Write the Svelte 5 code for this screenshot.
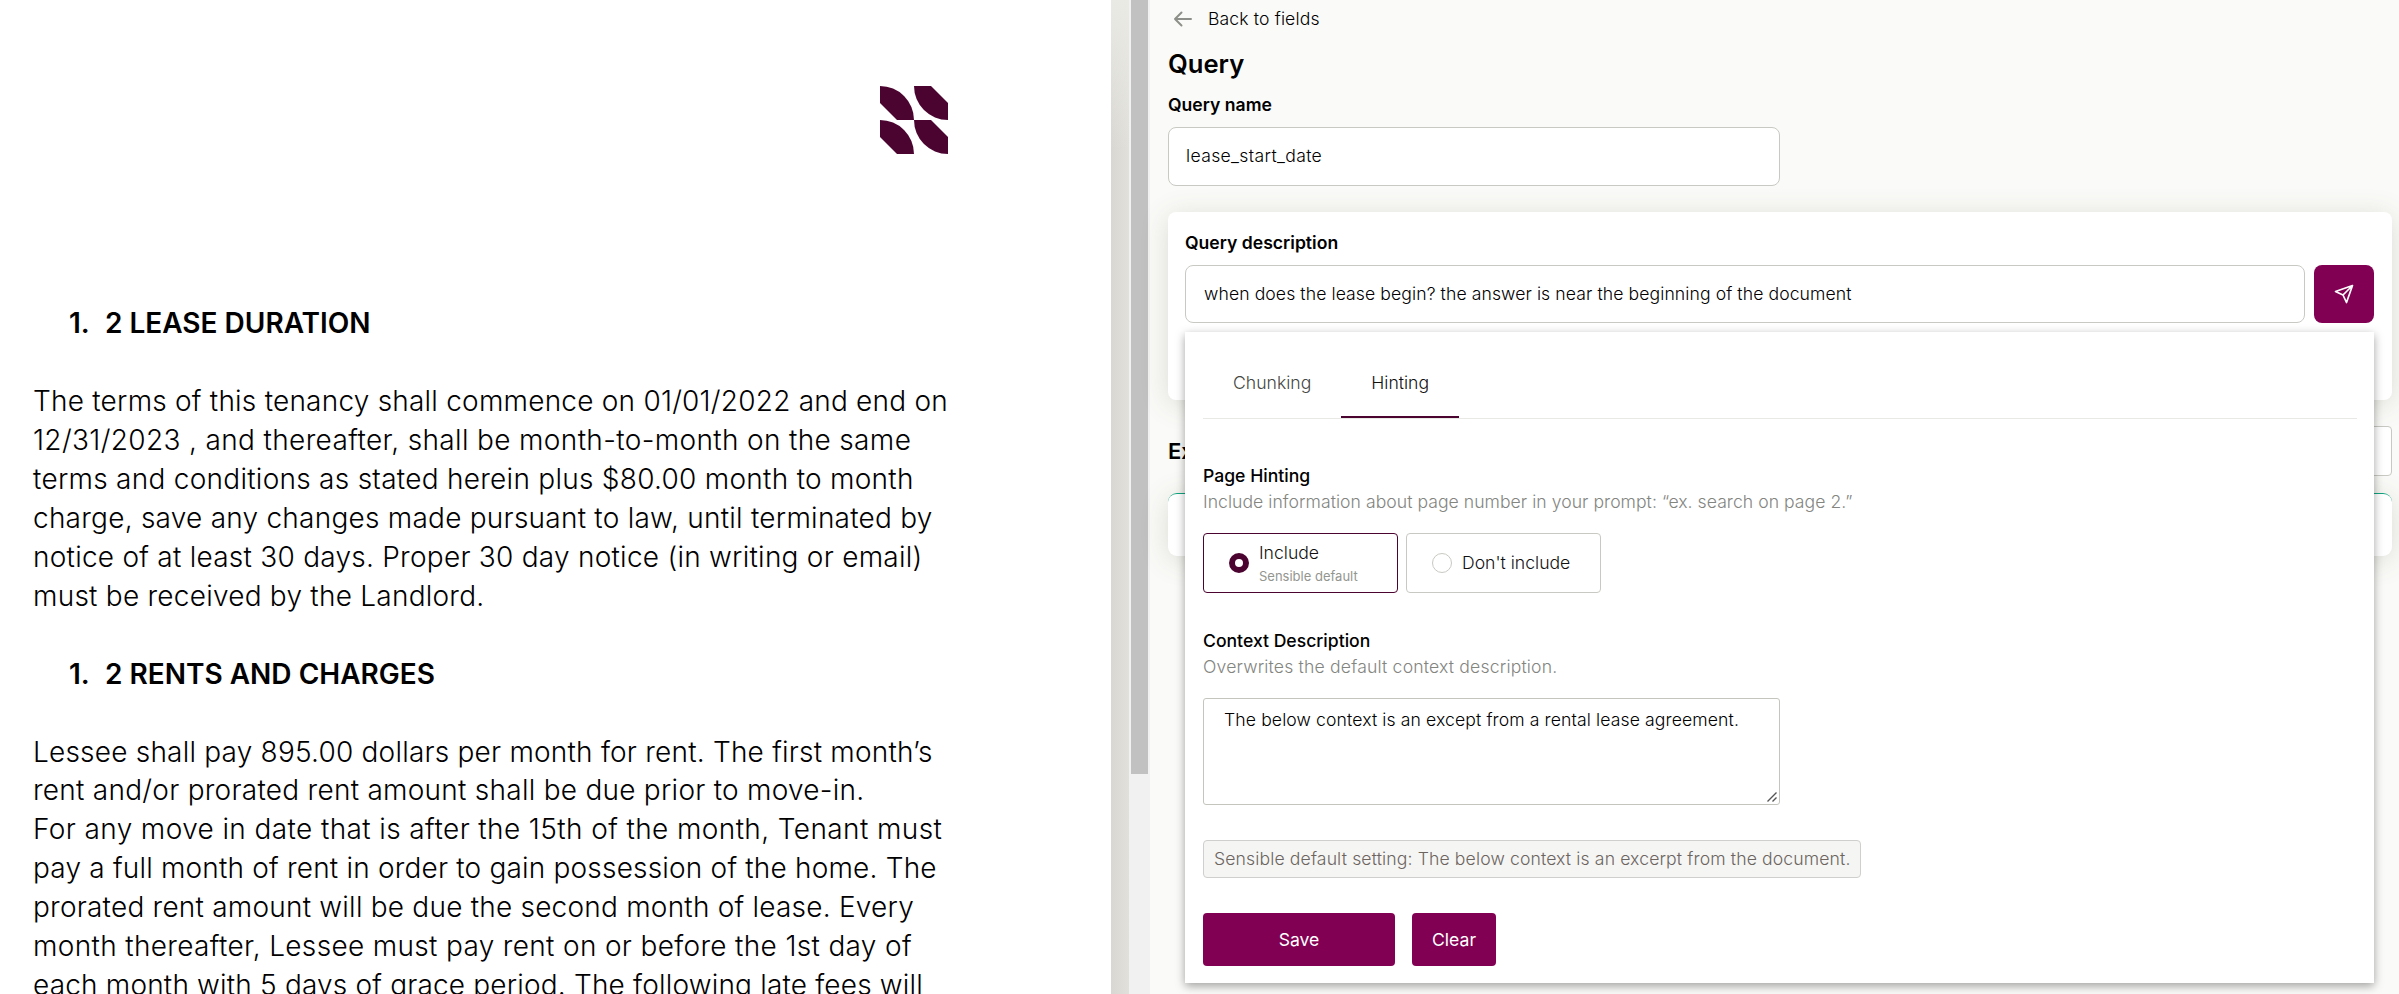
<script>
  const duration = [
    { text: 'The terms of this tenancy shall commence on 01/01/2022 and end on', tracking: 0.22 },
    { text: '12/31/2023 , and thereafter, shall be month-to-month on the same', tracking: 0.35 },
    { text: 'terms and conditions as stated herein plus $80.00 month to month', tracking: 0.27 },
    { text: 'charge, save any changes made pursuant to law, until terminated by', tracking: 0.24 },
    { text: 'notice of at least 30 days. Proper 30 day notice (in writing or email)', tracking: 0.25 },
    { text: 'must be received by the Landlord.', tracking: 0.24 }
  ];
  const rents = [
    { text: 'Lessee shall pay 895.00 dollars per month for rent. The first month’s', tracking: 0.21 },
    { text: 'rent and/or prorated rent amount shall be due prior to move-in.', tracking: 0.26 },
    { text: 'For any move in date that is after the 15th of the month, Tenant must', tracking: 0.39 },
    { text: 'pay a full month of rent in order to gain possession of the home. The', tracking: 0.19 },
    { text: 'prorated rent amount will be due the second month of lease. Every', tracking: 0.22 },
    { text: 'month thereafter, Lessee must pay rent on or before the 1st day of', tracking: 0.33 },
    { text: 'each month with 5 days of grace period. The following late fees will', tracking: 0.18 }
  ];
</script>

<div class="app">
  <section class="viewer">
    <article class="page">
      <svg class="logo" viewBox="0 0 68 68" width="68" height="68" fill="#4b0430">
        <path d="M0 0A34 34 0 0 1 34 34H17L0 17Z" />
        <path d="M34 0H51L68 17V34A34 34 0 0 1 34 0Z" />
        <path d="M0 34A34 34 0 0 1 34 68H17L0 51Z" />
        <path d="M34 34H51L68 51V68A34 34 0 0 1 34 34Z" />
      </svg>
      <h2><span>1.</span>2 LEASE DURATION</h2>
      <div class="para">
        {#each duration as line}<div style:letter-spacing="{line.tracking}px">{line.text}</div>{/each}
      </div>
      <h2 class="second"><span>1.</span>2 RENTS AND CHARGES</h2>
      <div class="para rents">
        {#each rents as line}<div style:letter-spacing="{line.tracking}px">{line.text}</div>{/each}
      </div>
    </article>
    <div class="gutter"></div>
    <div class="scrollbar"><div class="thumb"></div></div>
  </section>

  <main class="panel">
    <a class="back">
      <svg width="20" height="18" viewBox="0 0 20 18" fill="none" stroke="#8d908a" stroke-width="2" stroke-linecap="round" stroke-linejoin="round">
        <path d="M18 9H2M8.500 2.500L2 9l6.500 6.500" />
      </svg>
      <span>Back to fields</span>
    </a>
    <h1>Query</h1>
    <div class="label name-label">Query name</div>
    <div class="input name">lease_start_date</div>

    <div class="card">
      <div class="label">Query description</div>
      <div class="row">
        <div class="input desc">when does the lease begin? the answer is near the beginning of the document</div>
        <button class="send" aria-label="Send">
          <svg width="20" height="20" viewBox="0 0 20 20" fill="none" stroke="#fff" stroke-width="1.700" stroke-linejoin="round">
            <path d="M18.500 1.500L1.500 7.500L9 11L12.500 18.500ZM18.500 1.500L9 11" />
          </svg>
        </button>
      </div>

      <div class="popup">
        <div class="tabs">
          <div class="tab">Chunking</div>
          <div class="tab active">Hinting</div>
        </div>
        <div class="title">Page Hinting</div>
        <div class="hint">Include information about page number in your prompt: “ex. search on page 2.”</div>
        <div class="options">
          <div class="option selected">
            <i></i>
            <div><div class="opt">Include</div><div class="sub">Sensible default</div></div>
          </div>
          <div class="option">
            <i></i>
            <div class="opt">Don't include</div>
          </div>
        </div>
        <div class="title context">Context Description</div>
        <div class="hint over">Overwrites the default context description.</div>
        <div class="area">
          The below context is an except from a rental lease agreement.
          <svg width="10" height="10" viewBox="0 0 10 10" stroke="#555" stroke-width="1.400"><path d="M0.500 9.500L9.500 0.500M5.500 9.500L9.500 5.500" /></svg>
        </div>
        <div class="chip">Sensible default setting: The below context is an excerpt from the document.</div>
        <div class="actions">
          <button class="save">Save</button>
          <button class="clear">Clear</button>
        </div>
      </div>
    </div>

    <div class="extract">
      <div class="ex">Extraction</div>
      <div class="select"></div>
    </div>
    <div class="result"></div>
  </main>
</div>

<style>
  :global(body) { overflow: hidden; }
  * { box-sizing: border-box; }
  .app {
    display: grid;
    grid-template-columns: 1150px 1fr;
    height: 994px;
    overflow: hidden;
    background: #fafaf8;
    color: #000;
    font-family: Inter, sans-serif;
    white-space: nowrap;
  }
  .viewer { display: grid; grid-template-columns: 1111px 18px 21px; height: 994px; overflow: hidden; }
  .page { background: #fff; height: 994px; overflow: hidden; padding: 86px 0 0 33px; }
  .logo { display: block; margin-left: 847px; }
  h2 {
    display: flex;
    margin: 149px 0 0 36px;
    height: 40px;
    line-height: 40px;
    font-size: 28px;
    font-weight: 600;
  }
  h2 span { width: 36px; }
  h2.second { margin-top: 38px; }
  .para { margin-top: 39px; font-size: 28px; font-weight: 300; line-height: 39px; }
  .rents div:first-child { height: 38px; }
  .gutter {
    background:
      linear-gradient(#eaeae5, rgba(234, 234, 229, 0) 150px),
      linear-gradient(90deg, #d8d7d1, #e1e0da);
  }
  .scrollbar { background: #f1f1f1; padding: 0 2px; }
  .thumb { height: 774px; background: #c1c1c1; }

  .panel { padding: 0 7px 0 18px; font-size: 17.6px; font-weight: 300; }
  .back { display: flex; align-items: center; gap: 15px; height: 37px; padding-left: 5px; letter-spacing: 0.13px; }
  h1 { margin: 9px 0 0; height: 36px; line-height: 36px; font-size: 25.6px; font-weight: 600; }
  .label { font-weight: 600; line-height: 24px; height: 24px; font-size: 17.6px; }
  .name-label { margin-top: 11px; }
  .input {
    display: flex;
    align-items: center;
    padding-bottom: 2px;
    background: #fff;
    border: 1px solid #c9c9c3;
    border-radius: 8px;
    letter-spacing: 0.09px;
  }
  .name { width: 612px; height: 59px; margin-top: 10px; padding-left: 17px; letter-spacing: 0.34px; }
  .card {
    position: relative;
    height: 188px;
    margin-top: 26px;
    padding: 19px 18px 0 17px;
    border-radius: 8px;
    background: #fff;
    box-shadow: 0 4px 28px rgba(90, 90, 60, 0.19);
  }
  .row { display: flex; gap: 9px; margin-top: 10px; }
  .desc { flex: 1; height: 58px; padding-left: 18px; }
  button { border: 0; background: #820053; color: #fff; font: 400 17.6px Inter, sans-serif; padding: 0; }
  .send { display: grid; place-items: center; width: 60px; height: 58px; border-radius: 8px; }
  .popup {
    position: absolute;
    z-index: 2;
    top: 120px;
    left: 17px;
    right: 18px;
    height: 651px;
    padding: 0 17px 0 18px;
    background: #fff;
    box-shadow: 0 3px 9px rgba(0, 0, 0, 0.36);
  }
  .tabs { display: flex; height: 87px; border-bottom: 1px solid #e8e8e4; padding-top: 14px; }
  .tab { height: 72px; padding: 0 30px; line-height: 73px; color: #444642; }
  .active { color: #111; border-bottom: 2px solid #4b0430; }
  .title { margin-top: 45px; height: 24px; line-height: 24px; font-weight: 500; }
  .hint { margin-top: 2px; height: 24px; line-height: 24px; color: #83857f; letter-spacing: 0.04px; }
  .options { display: flex; gap: 8px; margin-top: 19px; }
  .option {
    display: flex;
    align-items: center;
    width: 195px;
    height: 60px;
    padding-left: 25px;
    gap: 10px;
    border: 1px solid #c9c9c3;
    border-radius: 4px;
  }
  .option i { width: 20px; height: 20px; border-radius: 50%; border: 1px solid #c9c9c3; }
  .selected { border-color: #4b0430; }
  .selected i { border: 6.5px solid #4b0430; }
  .opt { line-height: 24px; color: #111; }
  .sub { margin-top: 2px; font-size: 13px; font-weight: 400; line-height: 18px; color: #93958f; }
  .context { margin-top: 36px; }
  .over { letter-spacing: 0.17px; }
  .area {
    position: relative;
    width: 577px;
    height: 107px;
    margin-top: 19px;
    padding: 9px 20px;
    line-height: 24px;
    border: 1px solid #c4c5bc;
    border-radius: 3px;
    letter-spacing: 0.11px;
  }
  .area svg { position: absolute; right: 2px; bottom: 2px; }
  .chip {
    width: 658px;
    height: 38px;
    margin-top: 35px;
    padding-left: 10px;
    line-height: 36px;
    border: 1px solid #cfcfcd;
    border-radius: 4px;
    background: #f5f5f4;
    color: #6c655f;
    letter-spacing: 0.13px;
  }
  .actions { display: flex; gap: 17px; margin-top: 35px; }
  .save, .clear { height: 53px; border-radius: 4px; }
  .save { width: 192px; }
  .clear { width: 84px; }
  .extract { display: flex; justify-content: space-between; align-items: center; height: 50px; margin-top: 26px; }
  .ex { padding-bottom: 1px; font-size: 22px; font-weight: 600; }
  .select { width: 180px; height: 50px; border: 1px solid #c9c9c3; border-radius: 4px; background: #fff; }
  .result {
    height: 63px;
    margin-top: 17px;
    border-top: 1px solid #10a37f;
    border-radius: 9px;
    background: #fff;
    box-shadow: 0 4px 28px rgba(90, 90, 60, 0.19);
  }
</style>
